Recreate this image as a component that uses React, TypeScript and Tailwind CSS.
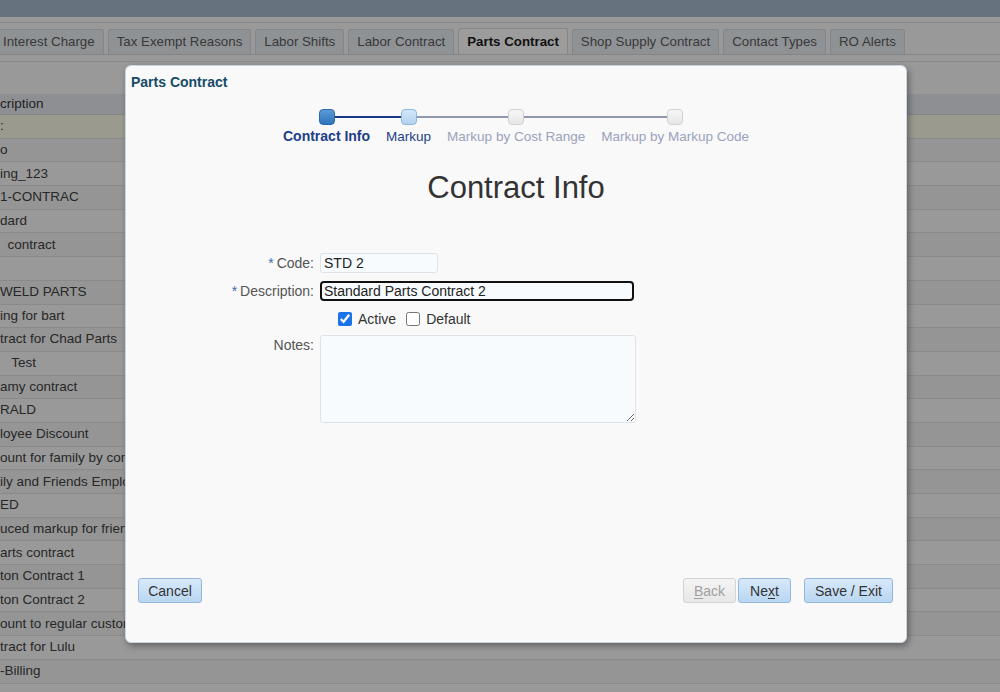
import type { ReactNode } from 'react'

const TABS = [
  { label: 'Interest Charge' },
  { label: 'Tax Exempt Reasons' },
  { label: 'Labor Shifts' },
  { label: 'Labor Contract' },
  { label: 'Parts Contract', active: true },
  { label: 'Shop Supply Contract' },
  { label: 'Contact Types' },
  { label: 'RO Alerts' },
]

// Rows of the list behind the dialog; only their right part shows at the window's edge.
const ROWS = [
  ':',
  'o',
  'ing_123',
  '1-CONTRAC',
  'dard',
  '\u00a0\u00a0contract',
  '',
  'WELD PARTS',
  'ing for bart',
  'tract for Chad Parts',
  '\u00a0\u00a0\u00a0Test',
  'amy contract',
  'RALD',
  'loyee Discount',
  'ount for family by contract',
  'ily and Friends Employees',
  'ED',
  'uced markup for friends',
  'arts contract',
  'ton Contract 1',
  'ton Contract 2',
  'ount to regular customers',
  'tract for Lulu',
  '-Billing',
  '',
]

const STEPS = [
  { label: 'Contract Info', state: 'current' },
  { label: 'Markup', state: 'next' },
  { label: 'Markup by Cost Range', state: 'todo' },
  { label: 'Markup by Markup Code', state: 'todo' },
] as const

function Step({
  label,
  state,
  leftLine,
  rightLine,
}: {
  label: string
  state: 'current' | 'next' | 'todo'
  leftLine: string
  rightLine: string
}) {
  const box =
    state === 'current'
      ? 'border-[#2a6aa8] bg-gradient-to-b from-[#5c9ad6] to-[#2f74bb]'
      : state === 'next'
        ? 'border-[#8ab6e0] bg-gradient-to-b from-[#d3e6f8] to-[#b3d2f1]'
        : 'border-[#d2d2d2] bg-gradient-to-b from-[#f7f7f7] to-[#e6e6e6]'
  const text =
    state === 'current'
      ? 'font-bold text-[#1d3f86] text-[14px]'
      : state === 'next'
        ? 'text-[#1d3f86] text-[13.5px]'
        : 'text-[#9aa2bc] text-[13.5px]'
  return (
    <div className="flex flex-col items-stretch">
      <div className="flex h-4 items-center">
        <div className={`h-[2px] flex-1 ${leftLine}`} />
        <div className={`h-4 w-4 rounded-[4px] border ${box}`} />
        <div className={`h-[2px] flex-1 ${rightLine}`} />
      </div>
      <div className={`mt-[3px] px-[8px] text-center leading-[17px] whitespace-nowrap ${text}`}>{label}</div>
    </div>
  )
}

function Field({ label, required, children }: { label: string; required?: boolean; children: ReactNode }) {
  return (
    <>
      <div className="self-start pt-[1px] text-right text-[14px] leading-[18px] text-[#555]">
        {required && <span className="mr-[3px] text-[#3d6ea8]">*</span>}
        {label}
      </div>
      <div>{children}</div>
    </>
  )
}

function Button({ children, disabled, className = '' }: { children: ReactNode; disabled?: boolean; className?: string }) {
  return (
    <button
      type="button"
      className={`h-[25px] rounded-[3px] border text-[14px] leading-none ${
        disabled
          ? 'border-[#d3d3d3] bg-gradient-to-b from-[#f4f4f4] to-[#e8e8e8] text-[#a0a0a0]'
          : 'border-[#94b8dc] bg-gradient-to-b from-[#d8e9f9] to-[#b9d6f2] text-[#333]'
      } ${className}`}
    >
      {children}
    </button>
  )
}

export default function App() {
  return (
    <div className="relative h-[692px] w-[1000px] overflow-hidden bg-[#999] font-['Liberation_Sans',Arial,sans-serif]">
      {/* page behind the dialog, already dimmed */}
      <div className="h-[17px] bg-[#67727f]" />
      <div className="h-[6px] border-b border-[#878787]" />
      <div className="flex h-[32px] items-end gap-[4px] border-b border-[#858585]">
        {TABS.map((tab, i) => (
          <div
            key={tab.label}
            className={`flex h-[25px] items-center rounded-t-[3px] border border-b-0 px-[8px] text-[13.3px] whitespace-nowrap ${
              i === 0 ? '-ml-[6px]' : ''
            } ${
              tab.active
                ? 'h-[26px] border-[#868686] bg-[#9c9c9c] font-bold text-[#111]'
                : 'border-[#848789] bg-[#8f9295] text-[#383838]'
            }`}
          >
            {tab.label}
          </div>
        ))}
      </div>
      <div className="h-[7px] border-b border-[#8a8a8a]" />
      <div className="h-[32px]" />
      <div className="flex h-[21px] items-center border-b border-[#858585] bg-[#8d8f93] text-[13.5px] text-[#222]">
        cription
      </div>
      {ROWS.map((row, i) => (
        <div
          key={i}
          className={`flex h-[23.7px] items-center border-b border-[#8a8a8a] text-[13.5px] whitespace-nowrap text-[#272727] ${
            i === 0 ? 'bg-[#9a9a8f]' : i % 2 === 1 ? 'bg-[#959595]' : 'bg-[#999]'
          }`}
        >
          {row}
        </div>
      ))}

      {/* dialog */}
      <div className="absolute top-[65px] left-[125px] flex h-[578px] w-[782px] flex-col rounded-[6px] border border-[#c9d6e2] bg-[#f9f9f9] px-[5px] pt-[8px] pb-[39px] shadow-[2px_3px_6px_rgba(0,0,0,0.35)]">
        <div className="text-[14px] leading-[17px] font-bold text-[#164b68]">Parts Contract</div>

        <div className="mt-[18px] flex justify-center">
          {STEPS.map((step, i) => (
            <Step
              key={step.label}
              label={step.label}
              state={step.state}
              leftLine={i === 0 ? '' : i === 1 ? 'bg-[#1b3a86]' : 'bg-[#8f97b1]'}
              rightLine={i === STEPS.length - 1 ? '' : i === 0 ? 'bg-[#1b3a86]' : 'bg-[#8f97b1]'}
            />
          ))}
        </div>

        <h1 className="mt-[25px] text-center text-[31px] leading-[36px] text-[#333]">Contract Info</h1>

        <div className="mt-[47px] grid grid-cols-[183px_1fr] gap-x-[6px]">
          <Field label="Code:" required>
            <input
              defaultValue="STD 2"
              className="block h-[20px] w-[118px] rounded-[3px] border border-[#dde3e8] bg-[#f7fbfd] px-[3px] text-[14px] text-[#222] outline-none"
            />
          </Field>
          <div className="col-span-2 h-[8px]" />
          <Field label="Description:" required>
            <input
              defaultValue="Standard Parts Contract 2"
              className="block h-[20px] w-[314px] rounded-[4px] border-2 border-[#111] bg-[#f7fbfd] px-[2px] text-[14px] text-[#222] outline-none"
            />
          </Field>
          <div className="col-span-2 h-[9px]" />
          <div />
          <div className="flex h-[18px] items-center pl-[18px] text-[14px] text-[#333]">
            <input type="checkbox" defaultChecked className="m-0 h-[14px] w-[14px] accent-[#1a73e8]" />
            <span className="ml-[6px]">Active</span>
            <input type="checkbox" className="m-0 ml-[10px] h-[14px] w-[14px]" />
            <span className="ml-[6px]">Default</span>
          </div>
          <div className="col-span-2 h-[7px]" />
          <Field label="Notes:">
            <textarea className="block h-[88px] w-[316px] rounded-[3px] border border-[#dde3e8] bg-[#f7fbfd] outline-none" />
          </Field>
        </div>

        <div className="mt-auto flex items-center pr-[8px] pl-[7px]">
          <Button className="w-[64px]">Cancel</Button>
          <div className="flex-1" />
          <Button disabled className="w-[53px]">
            <span className="underline underline-offset-2">B</span>ack
          </Button>
          <Button className="ml-[2px] w-[53px]">
            Ne<span className="underline underline-offset-2">x</span>t
          </Button>
          <Button className="ml-[13px] w-[89px]">Save / Exit</Button>
        </div>
      </div>
    </div>
  )
}
